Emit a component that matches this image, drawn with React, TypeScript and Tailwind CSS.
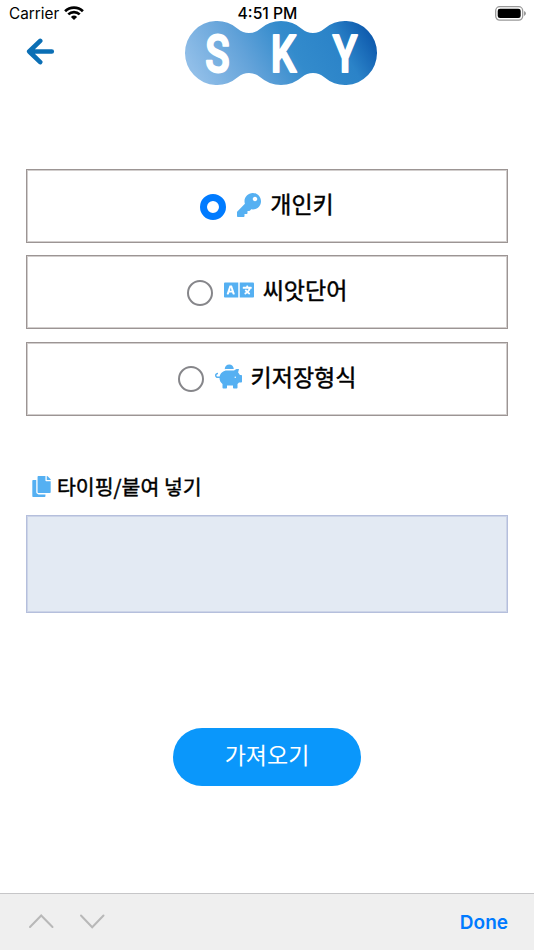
import type { ReactNode } from "react";
import { FaKey, FaLanguage, FaPiggyBank, FaCopy } from "react-icons/fa";

const korean = "font-['Noto_Sans_CJK_KR',sans-serif] font-normal [-webkit-text-stroke:0.45px_#000]";

function Logo() {
  return (
    <svg className="block h-16 w-48" viewBox="0 0 192 64">
      <defs>
        <linearGradient id="sky" gradientUnits="userSpaceOnUse" x1="22" y1="72" x2="172" y2="-16">
          <stop offset="0" stopColor="#90bee8" />
          <stop offset="0.3" stopColor="#62a2d9" />
          <stop offset="0.55" stopColor="#338bcc" />
          <stop offset="0.8" stopColor="#2b83c8" />
          <stop offset="1" stopColor="#0c57ab" />
        </linearGradient>
      </defs>
      <path
        fill="url(#sky)"
        d="M53.04 7.89A16.67 16.67 0 0 0 74.96 7.89A32 32 0 0 1 117.04 7.89A16.67 16.67 0 0 0 138.96 7.89A32 32 0 1 1 138.96 56.11A16.67 16.67 0 0 0 117.04 56.11A32 32 0 0 1 74.96 56.11A16.67 16.67 0 0 0 53.04 56.11A32 32 0 1 1 53.04 7.89Z"
      />
      <g
        className="font-['Roboto',sans-serif]"
        fill="#fff"
        stroke="#fff"
        strokeWidth="2.2"
        strokeLinejoin="round"
        fontSize="53"
        fontWeight="500"
        textAnchor="middle"
      >
        <text transform="translate(32.5 51.2) scale(.76 .98)">S</text>
        <text transform="translate(98.5 51.2) scale(.76 .98)">K</text>
        <text transform="translate(160 51.2) scale(.76 .98)">Y</text>
      </g>
    </svg>
  );
}

function Option({ checked, icon, label }: { checked?: boolean; icon: ReactNode; label: string }) {
  return (
    <label className="flex h-[74px] items-center justify-center border border-[#9c9594] shadow-[inset_0_0_0_1px_#d2cecd]">
      <span
        className={
          checked
            ? "mt-px size-[26px] rounded-full border-[7.5px] border-[#007bff]"
            : "mt-px size-[26px] rounded-full border-2 border-[#86868a]"
        }
      />
      {icon}
      <span className={`${korean} -mt-1.5 text-[23px] leading-8 text-black`}>{label}</span>
    </label>
  );
}

export default function App() {
  return (
    <main className="flex h-[950px] w-[534px] flex-col overflow-hidden bg-white font-['Inter',sans-serif]">
      <div className="grid h-[21px] grid-cols-3 pr-2 pl-[9px] pt-[5px] text-[15px] leading-[18px] text-black">
        <div className="flex gap-[5px]">
          <span className="text-[15.3px]">Carrier</span>
          <svg className="mt-px h-3.5 w-5" viewBox="0 0 20 14" fill="none" stroke="#000" strokeWidth="2.7">
            <path d="M1.1 5.2A12.7 12.7 0 0 1 18.9 5.2M4.3 8.4A8.2 8.2 0 0 1 15.7 8.4" />
            <path d="M10 14L6.9 10.9A4.5 4.5 0 0 1 13.1 10.9Z" fill="#000" stroke="none" />
          </svg>
        </div>
        <span className="text-center text-[15.7px] font-medium">4:51 PM</span>
        <svg className="mt-px ml-auto h-[15px] w-8" viewBox="0 0 32 15">
          <rect x="1.7" y=".7" width="27" height="13.4" rx="4" fill="#fff" stroke="#999" strokeWidth="1.3" />
          <rect x="3.7" y="2.7" width="23" height="9.4" rx="2.3" />
          <path d="M30 5Q32 6 32 7.4T30 10Z" fill="#999" />
        </svg>
      </div>
      <header className="flex h-[148px] items-start">
        <svg
          className="mt-[17px] ml-[26px] h-[27px] w-[29px]"
          viewBox="0 0 29 27"
          fill="none"
          stroke="#0b6fb5"
          strokeWidth="4.6"
          strokeLinecap="round"
          strokeLinejoin="round"
        >
          <path d="M14.2 2.9L3.2 13.5L14.2 24.1M3.5 13.5H25.8" />
        </svg>
        <div className="ml-[130px]">
          <Logo />
        </div>
      </header>
      <section className="mx-[26px] flex flex-col gap-[12.4px]">
        <Option checked icon={<FaKey className="mr-[9px] -mt-[3px] ml-[11px] size-6 text-[#55b0f2]" />} label="개인키" />
        <Option icon={<FaLanguage className="mr-[9px] -mt-1 ml-[11px] size-[30px] text-[#55b0f2]" />} label="씨앗단어" />
        <Option icon={<FaPiggyBank className="mr-[9px] -mt-1 ml-[11px] size-[27px] text-[#55b0f2]" />} label="키저장형식" />
      </section>
      <section className="mx-[26px] mt-[55px]">
        <div className="flex h-[44px] items-start gap-[5px] pl-[5px]">
          <FaCopy className="mt-[5px] size-[21px] text-[#55b0f2]" />
          <span className={`${korean} text-[20.5px] leading-[31px] text-black`}>타이핑/붙여 넣기</span>
        </div>
        <div className="h-[98px] border border-[#b5bfdc] bg-[#e3eaf3] shadow-[inset_0_0_0_1px_#ccd4e8]" />
      </section>
      <button
        className="mx-auto mt-[115px] flex h-[58px] w-[188px] items-center justify-center rounded-full bg-[#0a97fb] pb-1.5 font-['Noto_Sans_CJK_KR',sans-serif] text-[23px] leading-8 text-white"
      >
        가져오기
      </button>
      <footer className="mt-auto flex h-[57px] items-center border-t border-[#c6c6c8] bg-[#efefef] pr-[26px] pl-7">
        <svg className="-mt-0.5 h-5 w-[78px]" viewBox="0 0 78 20" fill="none" stroke="#b8b8b8" strokeWidth="2">
          <path d="M2 16L13.2 4.5L24.5 16M53 4.5L64.2 16.2L75.5 4.5" strokeLinecap="round" />
        </svg>
        <span className="mt-0.5 ml-auto text-[19px] font-semibold text-[#007aff]">Done</span>
      </footer>
    </main>
  );
}
